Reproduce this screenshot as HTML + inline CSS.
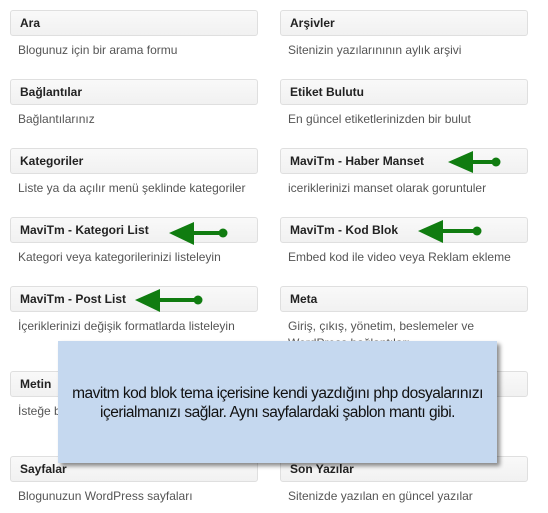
<!DOCTYPE html>
<html><head><meta charset="utf-8"><style>
body{margin:0;width:548px;height:513px;background:#fff;position:relative;overflow:hidden;font-family:"Liberation Sans",Arial,sans-serif}
.b{position:absolute;width:248px;height:26px;border:1px solid #dfdfdf;border-radius:3px;background:linear-gradient(#f9f9f9,#f1f1f1);box-sizing:border-box;font-weight:bold;font-size:12px;color:#222;line-height:25px;padding-left:9px}
.d{position:absolute;font-size:12px;color:#555;line-height:17px;width:250px}
.pop{position:absolute;left:58px;top:341px;width:439px;height:122px;background:#c5d8ef;box-shadow:3px 3px 4px rgba(0,0,0,.45);text-align:center;font-size:15.5px;letter-spacing:-0.5px;color:#111;line-height:19px;box-sizing:border-box;padding-top:43px;white-space:nowrap}
svg{position:absolute;left:0;top:0}
</style></head><body>
<div class="b" style="left:10px;top:10px">Ara</div><div class="d" style="left:18px;top:42px">Blogunuz için bir arama formu</div>
<div class="b" style="left:280px;top:10px">Arşivler</div><div class="d" style="left:288px;top:42px">Sitenizin yazılarınının aylık arşivi</div>
<div class="b" style="left:10px;top:79px">Bağlantılar</div><div class="d" style="left:18px;top:111px">Bağlantılarınız</div>
<div class="b" style="left:280px;top:79px">Etiket Bulutu</div><div class="d" style="left:288px;top:111px">En güncel etiketlerinizden bir bulut</div>
<div class="b" style="left:10px;top:148px">Kategoriler</div><div class="d" style="left:18px;top:180px">Liste ya da açılır menü şeklinde kategoriler</div>
<div class="b" style="left:280px;top:148px">MaviTm - Haber Manset</div><div class="d" style="left:288px;top:180px">iceriklerinizi manset olarak goruntuler</div>
<div class="b" style="left:10px;top:217px">MaviTm - Kategori List</div><div class="d" style="left:18px;top:249px">Kategori veya kategorilerinizi listeleyin</div>
<div class="b" style="left:280px;top:217px">MaviTm - Kod Blok</div><div class="d" style="left:288px;top:249px">Embed kod ile video veya Reklam ekleme</div>
<div class="b" style="left:10px;top:286px">MaviTm - Post List</div><div class="d" style="left:18px;top:318px">İçeriklerinizi değişik formatlarda listeleyin</div>
<div class="b" style="left:280px;top:286px">Meta</div><div class="d" style="left:288px;top:318px">Giriş, çıkış, yönetim, beslemeler ve<br>WordPress bağlantıları</div>
<div class="b" style="left:10px;top:371px">Metin</div><div class="d" style="left:18px;top:403px">İsteğe bağlı metin</div>
<div class="b" style="left:280px;top:371px"></div>
<div class="b" style="left:10px;top:456px">Sayfalar</div><div class="d" style="left:18px;top:488px">Blogunuzun WordPress sayfaları</div>
<div class="b" style="left:280px;top:456px">Son Yazılar</div><div class="d" style="left:288px;top:488px">Sitenizde yazılan en güncel yazılar</div>
<svg width="548" height="513" fill="#107c10" stroke="#107c10">
<g><polygon points="448,162 473,151 473,173" stroke="none"/><line x1="470" y1="162" x2="496" y2="162" stroke-width="4"/><circle cx="496" cy="162" r="4.5" stroke="none"/></g>
<g><polygon points="169,233 194,222 194,245" stroke="none"/><line x1="190" y1="233" x2="223" y2="233" stroke-width="4"/><circle cx="223" cy="233" r="4.5" stroke="none"/></g>
<g><polygon points="418,231 443,220 443,243" stroke="none"/><line x1="440" y1="231" x2="477" y2="231" stroke-width="4"/><circle cx="477" cy="231" r="4.5" stroke="none"/></g>
<g><polygon points="135,300 160,289 160,312" stroke="none"/><line x1="157" y1="300" x2="198" y2="300" stroke-width="4"/><circle cx="198" cy="300" r="4.5" stroke="none"/></g>
</svg>
<div class="pop">mavitm kod blok tema içerisine kendi yazdığını php dosyalarınızı<br>içerialmanızı sağlar. Aynı sayfalardaki şablon mantı gibi.</div>
</body></html>
